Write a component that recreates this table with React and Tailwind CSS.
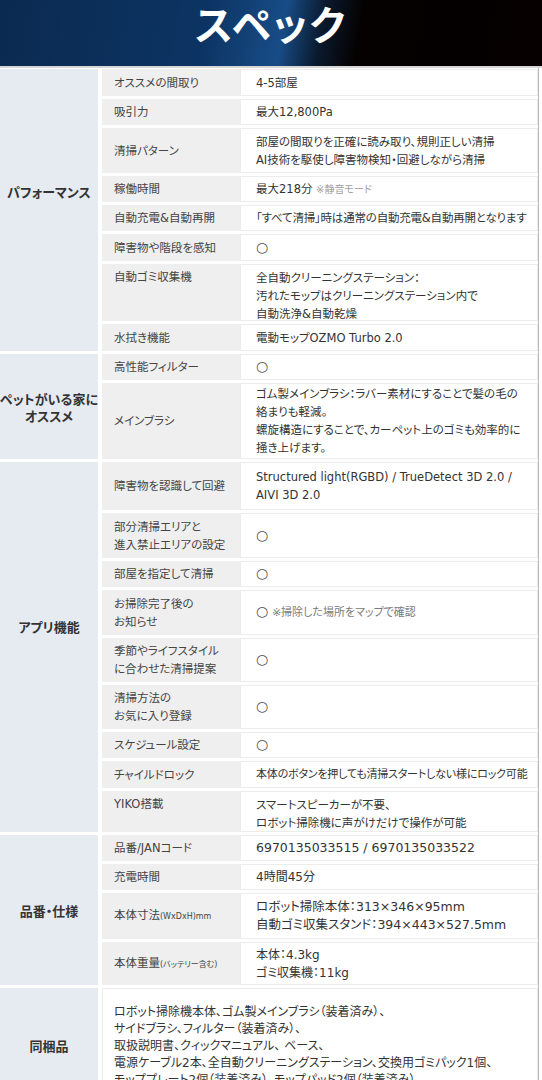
import React from "react";

const Circle = () => <span className="text-[14px] leading-[14px] text-[#555]">○</span>;

const sections = [
  {
    cat: ["パフォーマンス"],
    catc: "pb-[38px]",
    rows: [
      { l: ["オススメの間取り"], v: ["4-5部屋"], h: "h-[27px]" },
      { l: ["吸引力"], v: ["最大12,800Pa"], h: "h-[26px]" },
      { l: ["清掃パターン"], v: ["部屋の間取りを正確に読み取り、規則正しい清掃", "AI技術を駆使し障害物検知・回避しながら清掃"], h: "h-[45px]" },
      { l: ["稼働時間"], v: [<span key="a">最大218分 <span className="text-[10px] text-[#a0a0a0]">※静音モード</span></span>], h: "h-[26px]" },
      { l: ["自動充電&自動再開"], v: ["「すべて清掃」時は通常の自動充電&自動再開となります"], h: "h-[26px]", vc: "tracking-[-0.2px]" },
      { l: ["障害物や階段を感知"], v: [<Circle key="c" />], h: "h-[27px]" },
      { l: ["自動ゴミ収集機"], v: ["全自動クリーニングステーション：", "汚れたモップはクリーニングステーション内で", "自動洗浄&自動乾燥"], h: "h-[57px]", top: true },
      { l: ["水拭き機能"], v: ["電動モップOZMO Turbo 2.0"], h: "h-[27px]" },
    ],
  },
  {
    cat: ["ペットがいる家に", "オススメ"],
    catc: "text-[12px]",
    rows: [
      { l: ["高性能フィルター"], v: [<Circle key="c" />], h: "h-[26px]" },
      { l: ["メインブラシ"], v: ["ゴム製メインブラシ：ラバー素材にすることで髪の毛の", "絡まりも軽減。", "螺旋構造にすることで、カーペット上のゴミも効率的に", "掻き上げます。"], h: "h-[76px]" },
    ],
  },
  {
    cat: ["アプリ機能"],
    catc: "pb-[42px]",
    rows: [
      { l: ["障害物を認識して回避"], v: ["Structured light(RGBD) / TrueDetect 3D 2.0 /", "AIVI 3D 2.0"], h: "h-[48px]" },
      { l: ["部分清掃エリアと", "進入禁止エリアの設定"], v: [<Circle key="c" />], h: "h-[45px]" },
      { l: ["部屋を指定して清掃"], v: [<Circle key="c" />], h: "h-[26px]" },
      { l: ["お掃除完了後の", "お知らせ"], v: [<span key="a"><Circle /> <span className="text-[11px] text-[#7a7a7a]">※掃除した場所をマップで確認</span></span>], h: "h-[45px]" },
      { l: ["季節やライフスタイル", "に合わせた清掃提案"], v: [<Circle key="c" />], h: "h-[44px]" },
      { l: ["清掃方法の", "お気に入り登録"], v: [<Circle key="c" />], h: "h-[44px]" },
      { l: ["スケジュール設定"], v: [<Circle key="c" />], h: "h-[26px]" },
      { l: ["チャイルドロック"], v: ["本体のボタンを押しても清掃スタートしない様にロック可能"], h: "h-[27px]", vc: "text-[11px] tracking-[-0.2px]" },
      { l: ["YIKO搭載"], v: ["スマートスピーカーが不要、", "ロボット掃除機に声がけだけで操作が可能"], h: "h-[41px]", top: true },
    ],
  },
  {
    cat: ["品番・仕様"],
    rows: [
      { l: ["品番/JANコード"], v: ["6970135033515 / 6970135033522"], h: "h-[26px]", vc: "text-[12.5px]" },
      { l: ["充電時間"], v: ["4時間45分"], h: "h-[26px]", vc: "text-[12px]" },
      { l: [<span key="a">本体寸法<span className="text-[8px]">(WxDxH)mm</span></span>], v: ["ロボット掃除本体：313×346×95mm", "自動ゴミ収集スタンド：394×443×527.5mm"], h: "h-[46px]", vc: "text-[12.5px]" },
      { l: [<span key="a">本体重量<span className="text-[8px]">(バッテリー含む)</span></span>], v: ["本体：4.3kg", "ゴミ収集機：11kg"], h: "h-[43px]", vc: "text-[12px]" },
    ],
  },
];

function Row({ r }) {
  return (
    <div className={`flex ${r.h}`}>
      <div className={`w-[138px] shrink-0 bg-[#efefef] pl-[12px] pr-[4px] flex flex-col ${r.top ? "justify-start pt-[4px]" : "justify-center"} text-[11.5px] leading-[18px] text-[#444]`}>
        {r.l.map((t, i) => (
          <div key={i} className="whitespace-nowrap">{t}</div>
        ))}
      </div>
      <div className={`flex-1 min-w-0 bg-white border border-[#ececec] pl-[15px] flex flex-col ${r.top ? "justify-start pt-[4px]" : "justify-center"} text-[11.5px] leading-[18px] text-[#333] ${r.vc || ""}`}>
        {r.v.map((t, i) => (
          <div key={i} className="whitespace-nowrap">{t}</div>
        ))}
      </div>
    </div>
  );
}

export default function App() {
  return (
    <div className="w-[542px] h-[1080px] overflow-hidden bg-white font-['Noto_Sans_CJK_JP',sans-serif] [font-feature-settings:'palt']">
      <div className="h-[66px] flex justify-center items-start bg-[linear-gradient(100deg,#0b2a50_0%,#0c3463_38%,#184c86_52%,#0a1a2e_59%,#050101_66%,#060000_100%)]">
        <div className="text-white font-bold text-[40px] leading-[46px] tracking-[2px]">スペック</div>
      </div>
      <div className="h-[2px] bg-[#d6d6d6]" />
      <div className="w-[539px] border-r border-[#b8b8b8] flex flex-col gap-[3px] pt-[1px] font-['DejaVu_Sans','Noto_Sans_CJK_JP',sans-serif]">
        {sections.map((s, si) => (
          <div key={si} className="flex gap-[4px]">
            <div className={`w-[98px] shrink-0 bg-[#e6ebf1] flex flex-col items-center justify-center text-[13px] leading-[17px] font-bold text-[#333] font-['Noto_Sans_CJK_JP',sans-serif] ${s.catc || ""}`}>
              {s.cat.map((c, i) => (
                <div key={i} className="whitespace-nowrap">{c}</div>
              ))}
            </div>
            <div className="flex-1 min-w-0 flex flex-col gap-[3px]">
              {s.rows.map((r, ri) => (
                <Row key={ri} r={r} />
              ))}
            </div>
          </div>
        ))}
        <div className="flex gap-[4px] h-[116px]">
          <div className="w-[98px] shrink-0 bg-[#e6ebf1] flex items-center justify-center text-[13px] font-bold text-[#333] font-['Noto_Sans_CJK_JP',sans-serif]">同梱品</div>
          <div className="flex-1 bg-white border border-[#ececec] pl-[11px] flex flex-col justify-center text-[12px] leading-[17px] text-[#333]">
            <div>ロボット掃除機本体、ゴム製メインブラシ（装着済み）、</div>
            <div>サイドブラシ、フィルター（装着済み）、</div>
            <div>取扱説明書、クィックマニュアル、 ベース、</div>
            <div>電源ケーブル2本、全自動クリーニングステーション、交換用ゴミパック1個、</div>
            <div>モッププレート2個（装着済み）、モップパッド2個（装着済み）</div>
          </div>
        </div>
      </div>
    </div>
  );
}
